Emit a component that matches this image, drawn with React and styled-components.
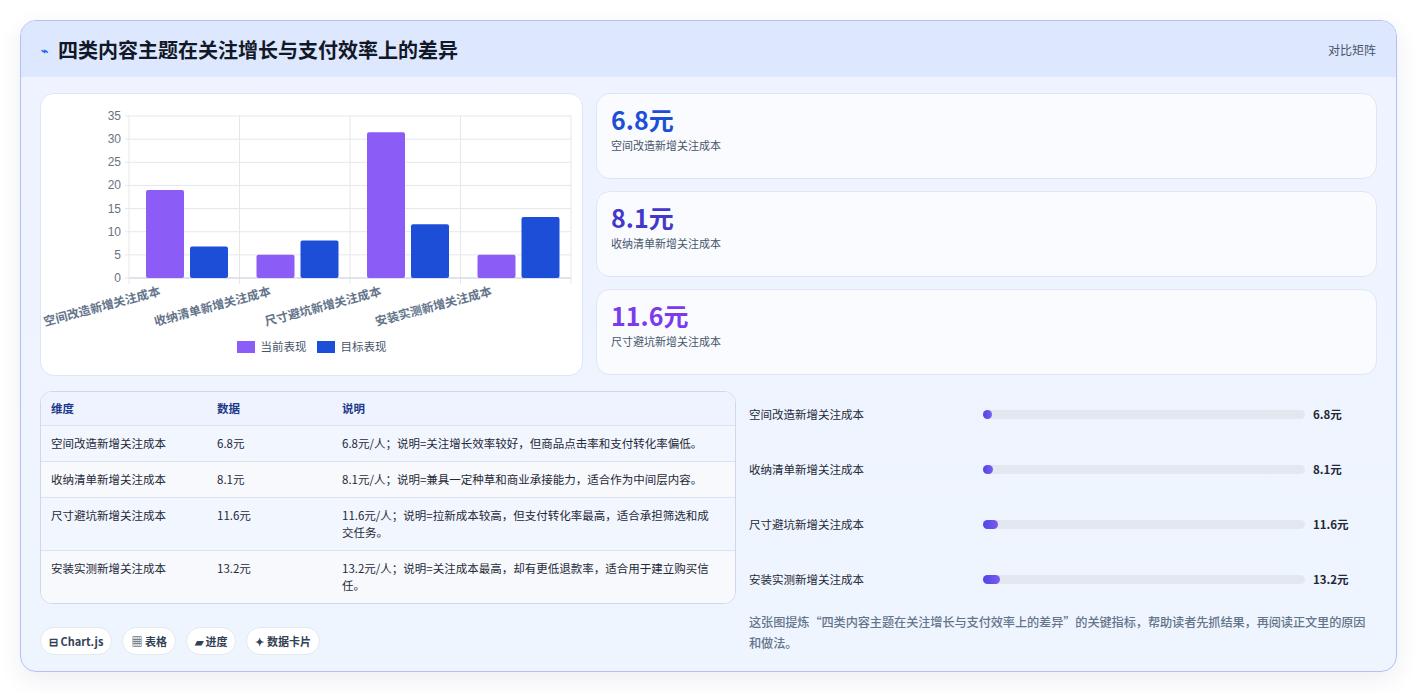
import React from "react";
import styled, { createGlobalStyle } from "styled-components";

const G = createGlobalStyle`
  body{margin:0;background:#fff;font-family:"Noto Sans CJK SC","Noto Sans",sans-serif;}
`;
const Page = styled.div`padding:20px 20px 20px 20px;`;
const Card = styled.div`
  border:1px solid #b4bff5;border-radius:16px;overflow:hidden;
  background:linear-gradient(180deg,#eef3ff,#eff5ff);
  box-shadow:0 8px 24px rgba(30,40,90,.08);
`;
const Header = styled.div`
  height:56px;display:flex;align-items:center;justify-content:space-between;
  padding:0 20px 0 20px;background:#dde7fd;
`;
const Title = styled.h1`margin:0;font-size:20px;font-weight:700;color:#111827;display:flex;align-items:center;gap:10px;`;
const Tag = styled.span`font-size:12px;color:#475569;`;
const Body = styled.div`padding:16px 19px 16px 19px;display:flex;flex-direction:column;gap:15px;`;
const Top = styled.div`display:grid;grid-template-columns:543px 1fr;gap:13px;`;
const Panel = styled.div`background:#fff;border:1px solid #dfe6f3;border-radius:14px;`;
const ChartPanel = styled(Panel)`height:283px;box-sizing:border-box;`;
const Stats = styled.div`display:flex;flex-direction:column;gap:12px;`;
const Stat = styled(Panel)`height:86px;box-sizing:border-box;padding:8px 14px;background:#f9fbff;`;
const Big = styled.div`font-size:25px;font-weight:700;color:${p=>p.c};line-height:34px;`;
const Small = styled.div`font-size:11px;color:#475569;margin-top:1px;`;
const Bottom = styled.div`display:grid;grid-template-columns:696px 1fr;gap:13px;`;
const Table = styled.div`border:1px solid #cfd8ea;border-radius:12px;overflow:hidden;background:#fff;`;
const Row = styled.div`
  display:grid;grid-template-columns:166px 125px 1fr;padding:${p=>p.h?"8px 10px":"9px 10px"};
  font-size:11.5px;line-height:17px;color:${p=>p.h?"#1e3a8a":"#1f2937"};font-weight:${p=>p.h?600:400};
  background:${p=>p.alt?"#f7f9fd":p.h?"#eef3ff":"#f2f6ff"};border-top:${p=>p.h?"none":"1px solid #dbe2ee"};
`;
const Cell = styled.div`padding-right:8px;`;
const Chips = styled.div`display:flex;gap:10px;margin-top:23px;`;
const Chip = styled.span`font-size:11px;font-weight:600;color:#334155;background:#fff;border:1px solid #e2e8f0;border-radius:14px;padding:5px 8px;`;
const Right = styled.div`display:flex;flex-direction:column;gap:9px;`;
const PRow = styled.div`display:grid;grid-template-columns:234px 1fr 72px;align-items:center;height:46px;font-size:11.5px;color:#1f2937;`;
const Track = styled.div`height:9px;border-radius:5px;background:#e2e7f0;`;
const Fill = styled.div`height:100%;border-radius:5px;background:linear-gradient(90deg,#4f46e5,#7c5cf0);`;
const Val = styled.div`font-weight:700;padding-left:8px;`;
const Note = styled.p`margin:1px 0 0;font-size:12.2px;letter-spacing:-0.1px;line-height:21px;color:#64748b;font-weight:500;`;
const Legend = styled.div`display:flex;justify-content:center;gap:10px;font-size:11.5px;color:#475569;margin-top:-6px;`;
const Sw = styled.span`display:inline-block;width:18px;height:12px;background:${p=>p.c};margin-right:6px;vertical-align:-2px;`;
const Bolt = styled.span`color:#2563eb;font-size:12px;`;

const cats=["空间改造新增关注成本","收纳清单新增关注成本","尺寸避坑新增关注成本","安装实测新增关注成本"];
const cur=[19,5,31.5,5], tgt=[6.8,8.1,11.6,13.2];

function Chart(){
  const x0=88,x1=530,y0=184,ppu=162/35,w=(x1-x0)/4;
  return (<svg width="541" height="250" style={{display:"block"}}>
    {[0,5,10,15,20,25,30,35].map(v=>{const y=y0-v*ppu;return <g key={v}>
      <line x1={x0-4} x2={x1} y1={y} y2={y} stroke="#e5e7eb"/>
      <text x={x0-8} y={y+4} fontSize="12" fill="#6b7280" textAnchor="end" fontFamily="Liberation Sans">{v}</text></g>})}
    {[0,1,2,3,4].map(i=><line key={i} x1={x0+i*w} x2={x0+i*w} y1={y0-35*ppu} y2={y0+6} stroke="#e5e7eb"/>)}
    <line x1={x0} x2={x1} y1={y0} y2={y0} stroke="#cbd5e1"/>
    {cats.map((c,i)=>{const bx=x0+i*w+17;return <g key={i}>
      <rect x={bx} y={y0-cur[i]*ppu} width="38" height={cur[i]*ppu} rx="2" fill="#8b5cf6"/>
      <rect x={bx+44} y={y0-tgt[i]*ppu} width="38" height={tgt[i]*ppu} rx="2" fill="#1d4ed8"/>
      <text transform={`translate(${x0+i*w+32},${y0+17}) rotate(-15)`} textAnchor="end" fontSize="12" fill="#64748b" fontWeight="600">{c}</text>
    </g>})}
  </svg>);
}

export default function App(){
  return (<Page><G/><Card>
    <Header><Title><Bolt>⌁</Bolt>四类内容主题在关注增长与支付效率上的差异</Title><Tag>对比矩阵</Tag></Header>
    <Body>
      <Top>
        <ChartPanel>
          <Chart/>
          <Legend><span><Sw c="#8b5cf6"/>当前表现</span><span><Sw c="#1d4ed8"/>目标表现</span></Legend>
        </ChartPanel>
        <Stats>
          <Stat><Big c="#1d4ed8">6.8元</Big><Small>空间改造新增关注成本</Small></Stat>
          <Stat><Big c="#4338ca">8.1元</Big><Small>收纳清单新增关注成本</Small></Stat>
          <Stat><Big c="#7c3aed">11.6元</Big><Small>尺寸避坑新增关注成本</Small></Stat>
        </Stats>
      </Top>
      <Bottom>
        <div>
          <Table>
            <Row h><Cell>维度</Cell><Cell>数据</Cell><Cell>说明</Cell></Row>
            <Row><Cell>空间改造新增关注成本</Cell><Cell>6.8元</Cell><Cell>6.8元/人；说明=关注增长效率较好，但商品点击率和支付转化率偏低。</Cell></Row>
            <Row alt><Cell>收纳清单新增关注成本</Cell><Cell>8.1元</Cell><Cell>8.1元/人；说明=兼具一定种草和商业承接能力，适合作为中间层内容。</Cell></Row>
            <Row><Cell>尺寸避坑新增关注成本</Cell><Cell>11.6元</Cell><Cell>11.6元/人；说明=拉新成本较高，但支付转化率最高，适合承担筛选和成交任务。</Cell></Row>
            <Row alt><Cell>安装实测新增关注成本</Cell><Cell>13.2元</Cell><Cell>13.2元/人；说明=关注成本最高，却有更低退款率，适合用于建立购买信任。</Cell></Row>
          </Table>
          <Chips><Chip>⊟ Chart.js</Chip><Chip>▦ 表格</Chip><Chip>▰ 进度</Chip><Chip>✦ 数据卡片</Chip></Chips>
        </div>
        <Right>
          {[["空间改造新增关注成本",6.8,"6.8元"],["收纳清单新增关注成本",8.1,"8.1元"],["尺寸避坑新增关注成本",11.6,"11.6元"],["安装实测新增关注成本",13.2,"13.2元"]].map(([l,v,t])=>(
            <PRow key={l}><span>{l}</span><Track><Fill style={{width:`${v*0.4}%`}}/></Track><Val>{t}</Val></PRow>
          ))}
          <Note>这张图提炼“四类内容主题在关注增长与支付效率上的差异”的关键指标，帮助读者先抓结果，再阅读正文里的原因和做法。</Note>
        </Right>
      </Bottom>
    </Body>
  </Card></Page>);
}
